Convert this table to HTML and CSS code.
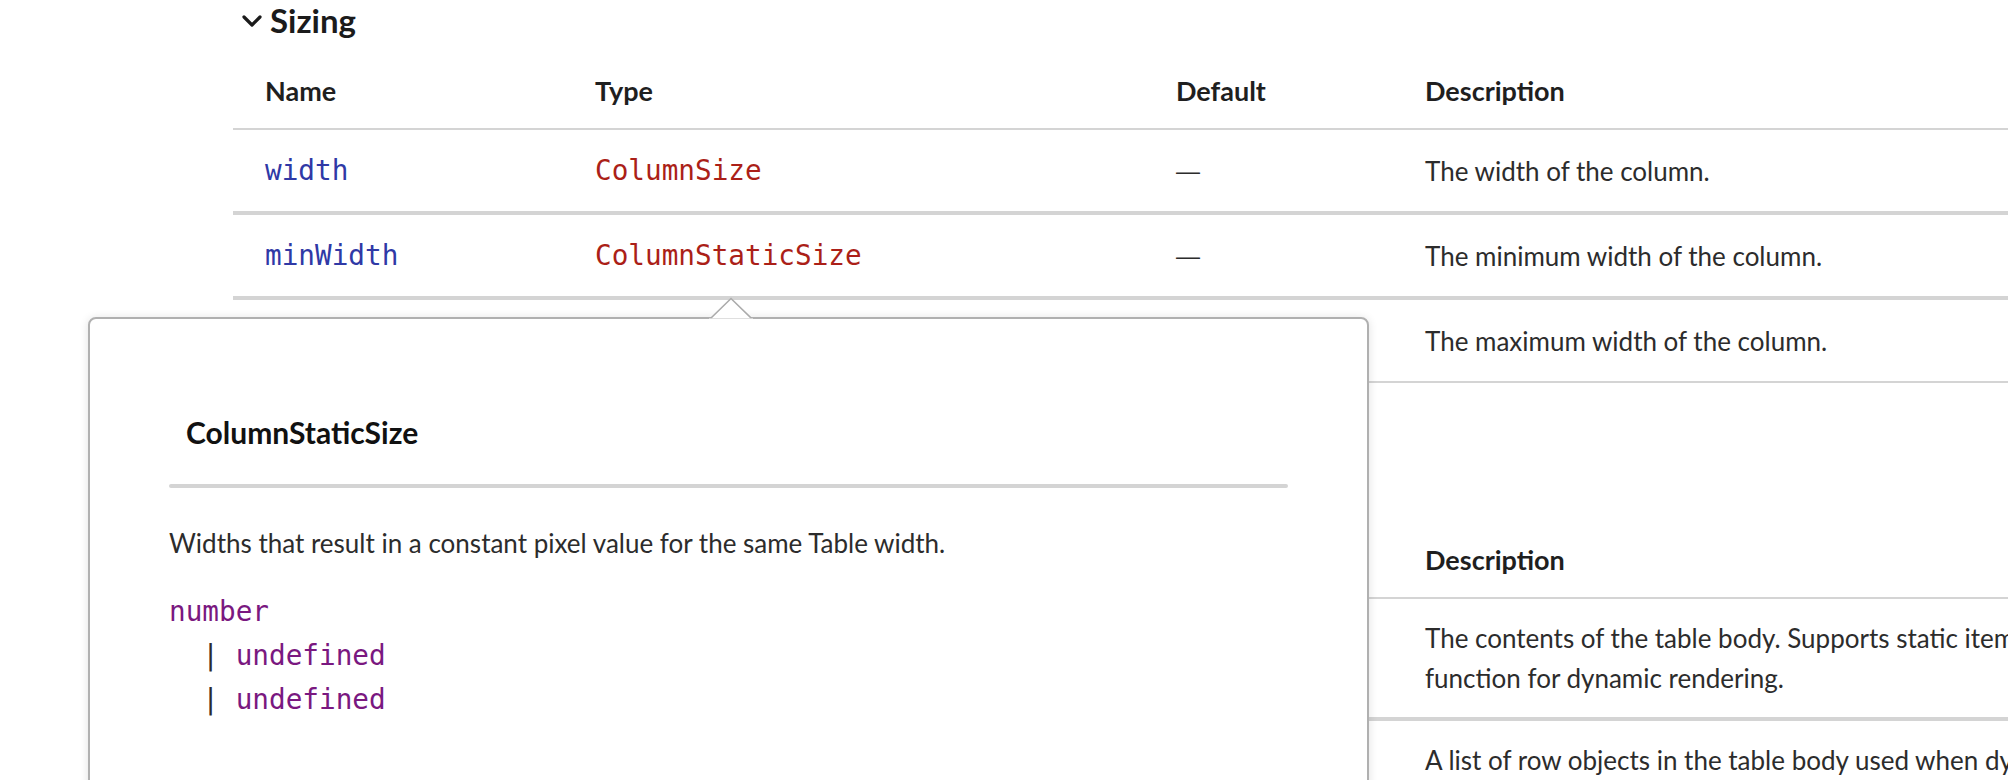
FILE: index.html
```html
<!DOCTYPE html>
<html lang="en">
<head>
<meta charset="utf-8">
<title>Table props</title>
<link rel="stylesheet" href="styles.css">
</head>
<body>
<main class="page">
  <section class="section">
    <h3 class="section-title">
      <svg class="chev" width="20" height="12" viewBox="0 0 20 12"><path d="M2 2 L10 10 L18 2" fill="none" stroke="#1b1b1b" stroke-width="3.2" stroke-linecap="round" stroke-linejoin="round"/></svg>
      <span>Sizing</span>
    </h3>
    <div class="table">
      <div class="row head">
        <div class="cell">Name</div><div class="cell">Type</div><div class="cell">Default</div><div class="cell">Description</div>
      </div>
      <div class="row">
        <div class="cell code name">width</div><div class="cell code type">ColumnSize</div><div class="cell"><span class="dash">—</span></div><div class="cell">The width of the column.</div>
      </div>
      <div class="row">
        <div class="cell code name">minWidth</div><div class="cell code type">ColumnStaticSize</div><div class="cell"><span class="dash">—</span></div><div class="cell">The minimum width of the column.</div>
      </div>
      <div class="row last">
        <div class="cell code name">maxWidth</div><div class="cell code type">ColumnStaticSize</div><div class="cell"><span class="dash">—</span></div><div class="cell">The maximum width of the column.</div>
      </div>
    </div>
  </section>

  <section class="section second">
    <h3 class="section-title">
      <svg class="chev" width="20" height="12" viewBox="0 0 20 12"><path d="M2 2 L10 10 L18 2" fill="none" stroke="#1b1b1b" stroke-width="3.2" stroke-linecap="round" stroke-linejoin="round"/></svg>
      <span>Content</span>
    </h3>
    <div class="table">
      <div class="row head">
        <div class="cell">Name</div><div class="cell">Type</div><div class="cell">Default</div><div class="cell">Description</div>
      </div>
      <div class="row">
        <div class="cell code name">children</div><div class="cell code type">CollectionChildren</div><div class="cell"><span class="dash">—</span></div><div class="cell nowrap">The contents of the table body. Supports static items or a<br>function for dynamic rendering.</div>
      </div>
      <div class="row">
        <div class="cell code name">items</div><div class="cell code type">Iterable</div><div class="cell"><span class="dash">—</span></div><div class="cell nowrap">A list of row objects in the table body used when dynamic rendering.</div>
      </div>
    </div>
  </section>
</main>

<div class="popover">
  <svg class="tip" width="44" height="23" viewBox="0 0 44 23"><polygon points="1,22 22,1.5 43,22" fill="#ffffff" stroke="#ababab" stroke-width="1.6"/><rect x="0" y="21.5" width="44" height="2" fill="#ffffff"/></svg>
  <div class="pop-title">ColumnStaticSize</div>
  <div class="pop-rule"></div>
  <p class="pop-desc">Widths that result in a constant pixel value for the same Table width.</p>
  <div class="union">
    <div class="u-line"><span class="kw">number</span></div>
    <div class="u-line"><span class="pipe">  | </span><span class="kw">undefined</span></div>
    <div class="u-line"><span class="pipe">  | </span><span class="kw">undefined</span></div>
  </div>
</div>
</body>
</html>
```

FILE: styles.css
```css
html, body {
  margin: 0;
  padding: 0;
  overflow: hidden;
  background: #ffffff;
}

body {
  font-family: Lato, "Open Sans", "Liberation Sans", sans-serif;
  font-size: 26px;
  color: #2c2c2c;
  width: 2008px;
  height: 780px;
  position: relative;
}

.page {
  padding-left: 233px;
}

.section-title {
  display: flex;
  align-items: center;
  gap: 8px;
  margin: 0 0 15px 9px;
  height: 40px;
  font-size: 33px;
  font-weight: 700;
  color: #1b1b1b;
  line-height: 40px;
}

.chev {
  display: block;
  margin-top: 2px;
}

.second {
  margin-top: 86px;
}

.table {
  display: flex;
  flex-direction: column;
}

.row {
  display: grid;
  grid-template-columns: 330px 581px 249px 1fr;
  border-bottom: 4px solid #d4d4d4;
}

.row.head {
  border-bottom-width: 2px;
}

.row.last {
  border-bottom-width: 2px;
}

.cell {
  padding: 19px 32px 19px 32px;
  min-height: 43px;
  line-height: 40px;
  display: flex;
  flex-direction: column;
  justify-content: center;
}

.head .cell {
  font-weight: 700;
  font-size: 27px;
  color: #1f1f1f;
  padding-top: 16px;
  padding-bottom: 17px;
  min-height: 40px;
}

.dash {
  font-family: "Liberation Sans", Arial, sans-serif;
  font-size: 24px;
  color: #2c2c2c;
}

.nowrap {
  display: block;
  white-space: nowrap;
}

.code {
  font-family: "DejaVu Sans Mono", "Liberation Mono", monospace;
  font-size: 27.7px;
}

.name {
  color: #2f39a6;
}

.type {
  color: #ab1f18;
}

.popover {
  position: absolute;
  left: 88px;
  top: 317px;
  width: 1281px;
  height: 560px;
  box-sizing: border-box;
  background: #ffffff;
  border: 2px solid #b0b0b0;
  border-radius: 8px;
  box-shadow: 0 1px 10px rgba(0, 0, 0, 0.12);
  padding: 93px 79px 0 79px;
}

.tip {
  position: absolute;
  left: 619px;
  top: -22px;
  display: block;
}

.pop-title {
  font-weight: 700;
  font-size: 30px;
  line-height: 40px;
  color: #111111;
  padding-left: 17px;
}

.pop-rule {
  height: 4px;
  border-radius: 2px;
  background: #d4d4d4;
  margin-top: 32px;
}

.pop-desc {
  margin: 35px 0 0 0;
  line-height: 40px;
  color: #2c2c2c;
}

.union {
  margin-top: 27px;
  font-family: "DejaVu Sans Mono", "Liberation Mono", monospace;
  font-size: 27.7px;
  line-height: 44px;
}

.u-line {
  white-space: pre;
}

.kw {
  color: #7a1880;
}

.pipe {
  color: #2c2c2c;
}
```
